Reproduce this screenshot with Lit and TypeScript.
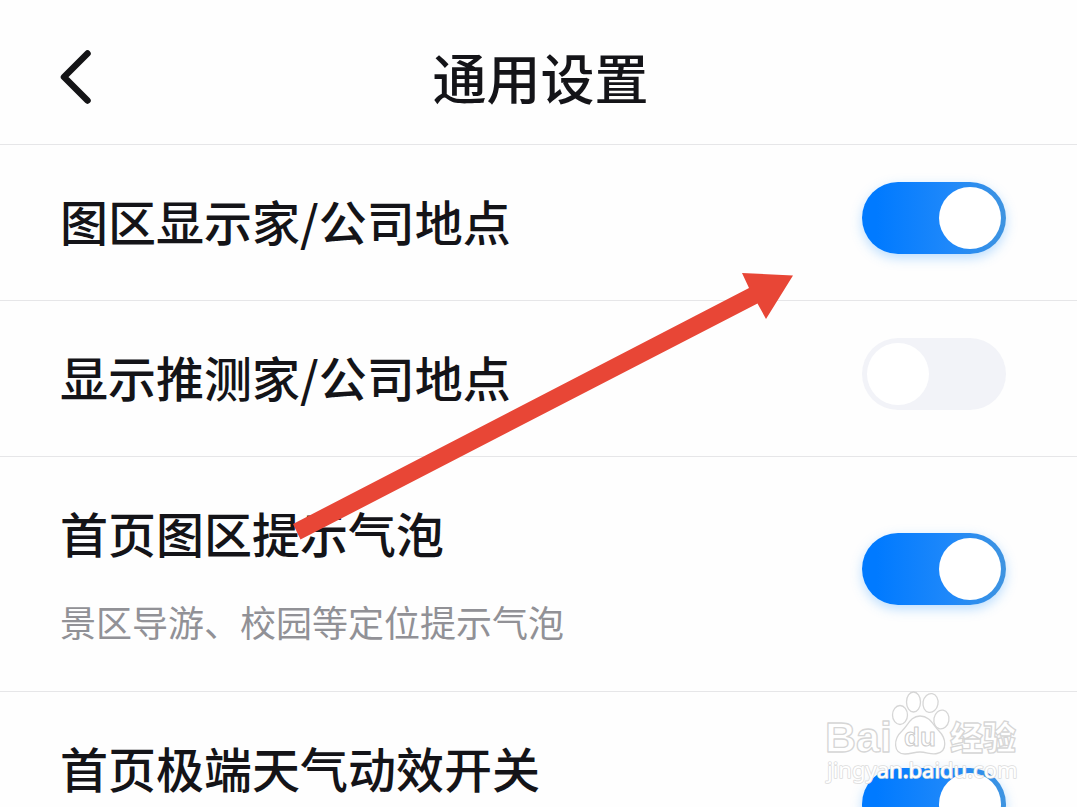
import { LitElement, html, css, nothing } from "lit";
import { customElement, property, state } from "lit/decorators.js";

interface Setting {
  id: string;
  label: string;
  hint?: string;
  tall?: boolean;
  on: boolean;
}

@customElement("setting-row")
class SettingRow extends LitElement {
  static styles = css`
    :host {
      display: block;
      border-bottom: 1px solid #e6e6e8;
    }
    .row {
      display: flex;
      justify-content: space-between;
      align-items: flex-start;
      padding: 37px 71px 37px 60px;
    }
    .tall {
      padding-bottom: 43px;
    }
    .text {
      display: flex;
      flex-direction: column;
      gap: 26px;
      padding-top: 2px;
    }
    .short .text {
      padding-bottom: 7px;
    }
    .label {
      font-size: 48px;
      line-height: 72px;
      font-weight: 500;
      color: #141418;
    }
    .hint {
      margin: 0;
      font-size: 36px;
      line-height: 54px;
      color: #919196;
    }
    .switch {
      appearance: none;
      flex: none;
      display: flex;
      align-items: center;
      box-sizing: border-box;
      width: 144px;
      height: 72px;
      margin: 0;
      padding: 0 5px;
      border-radius: 36px;
      background: #f2f3f8;
    }
    .switch::before {
      content: "";
      width: 62px;
      height: 62px;
      border-radius: 50%;
      background: #fff;
    }
    .switch:checked {
      justify-content: flex-end;
      background: linear-gradient(90deg, #007aff 10%, #1e88fa 60%, #3f94e0);
      box-shadow: 0 4px 12px rgba(60, 160, 255, 0.35);
    }
    .tall .switch {
      margin-top: 39px;
    }
  `;

  @property({ attribute: false }) setting!: Setting;

  render() {
    const s = this.setting;
    return html`
      <div class="row ${s.tall ? "tall" : "short"}">
        <div class="text">
          <label class="label" for=${s.id}>${s.label}</label>
          ${s.hint ? html`<p class="hint">${s.hint}</p>` : nothing}
        </div>
        <input class="switch" type="checkbox" id=${s.id} .checked=${s.on} />
      </div>
    `;
  }
}

@customElement("app-root")
class AppRoot extends LitElement {
  static styles = css`
    :host {
      display: block;
      position: relative;
      height: 100vh;
      overflow: hidden;
      background: #fefefe;
      font-family: "Noto Sans CJK SC", sans-serif;
    }
    .header {
      display: grid;
      grid-template-columns: 96px 1fr 92px;
      align-items: center;
      padding: 37px 0 27px;
      border-bottom: 1px solid #e6e6e8;
    }
    .back {
      display: flex;
      justify-content: flex-end;
      padding: 0;
      border: 0;
      background: none;
    }
    .title {
      margin: 0;
      font-size: 54px;
      line-height: 80px;
      font-weight: 500;
      text-align: center;
      color: #141418;
    }
    .arrow {
      position: absolute;
      left: 0;
      top: 0;
      pointer-events: none;
    }
    .mark {
      position: absolute;
      right: 50px;
      top: 684px;
      pointer-events: none;
    }
    .word {
      font-family: "Liberation Sans", Arial, sans-serif;
      font-weight: 700;
    }
    .cjk {
      font-family: "Noto Sans CJK SC", sans-serif;
      font-weight: 900;
    }
    .site {
      font-family: "Noto Sans", sans-serif;
      font-weight: 400;
    }
  `;

  @state() private settings: Setting[] = [
    { id: "home-company", label: "图区显示家/公司地点", on: true },
    { id: "guess-company", label: "显示推测家/公司地点", on: false },
    { id: "bubbles", label: "首页图区提示气泡", hint: "景区导游、校园等定位提示气泡", tall: true, on: true },
    { id: "weather", label: "首页极端天气动效开关", tall: true, on: true },
  ];

  render() {
    return html`
      <header class="header">
        <button class="back" aria-label="返回">
          <svg width="40" height="60" viewBox="0 0 40 60" fill="none" stroke="#141416" stroke-width="6.5" stroke-linecap="round" stroke-linejoin="round">
            <path d="M31.500 6.500 8 30 31.500 53.500" />
          </svg>
        </button>
        <h1 class="title">通用设置</h1>
      </header>
      <main>
        ${this.settings.map((s) => html`<setting-row .setting=${s}></setting-row>`)}
      </main>
      <svg class="arrow" width="800" height="560" viewBox="0 0 800 560" aria-hidden="true">
        <path d="M293 524 749 288 742 273 793 275.500 766 319 757.500 303.500 300.500 539.500Z" fill="#e84636" />
      </svg>
      <svg class="mark" width="204" height="104" viewBox="0 0 204 104">
        <g fill="#fff" stroke="#d6d6d6" stroke-width="1.3" stroke-linejoin="round">
          <text class="word" x="2" y="68" font-size="43">Bai</text>
          <ellipse cx="77" cy="31" rx="7.500" ry="9.500" />
          <ellipse cx="90.500" cy="18" rx="7" ry="10" />
          <ellipse cx="107.500" cy="19" rx="7.500" ry="9.500" transform="rotate(10 107.500 19)" />
          <ellipse cx="118.500" cy="35.500" rx="7.500" ry="9.500" transform="rotate(10 118.500 35)" />
          <path d="M97 32C88 32 85 41 79 47C70 55 70 70 82 70C88 70 91 68 97 68C104 68 108 71 114 69.500C125 67 123 54 116 47C110 41 107 32 97 32Z" />
          <text class="word" x="81" y="62" font-size="26" stroke="#cccccc" stroke-width="1">du</text>
          <text class="cjk" x="127" y="66" font-size="33">经验</text>
        </g>
        <text class="site" x="4" y="94" font-size="22" fill="#fff" stroke="#dcdcdc" stroke-width="1.6" stroke-linejoin="round" paint-order="stroke">jingyan.baidu.com</text>
      </svg>
    `;
  }
}
